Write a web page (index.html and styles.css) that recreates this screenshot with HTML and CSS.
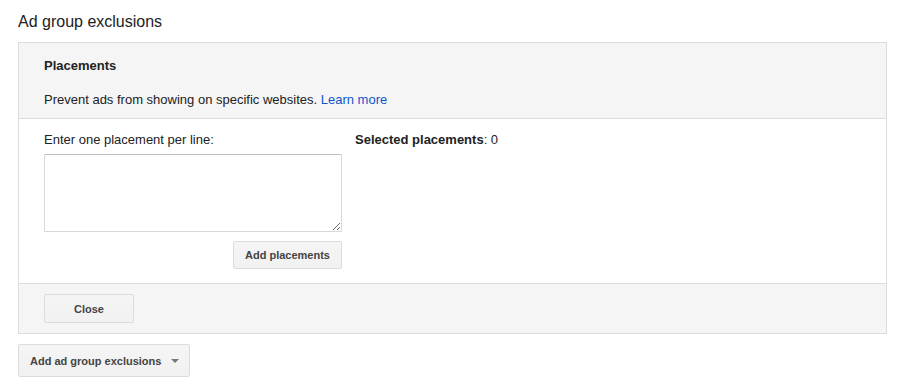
FILE: index.html
```html
<!doctype html>
<html lang="en">
<head>
  <meta charset="utf-8">
  <title>Ad group exclusions</title>
  <link rel="stylesheet" href="styles.css">
</head>
<body>

	<h1 class="title">Ad group exclusions</h1>

	<div class="panel">
		<div class="panel-head">
			<div class="panel-name">Placements</div>
			<div class="panel-desc">Prevent ads from showing on specific websites. <a href="#">Learn more</a></div>
		</div>
		<div class="panel-body">
			<div class="entry">
				<label class="entry-label" for="placements">Enter one placement per line:</label>
				<textarea id="placements" class="entry-box"></textarea>
				<div class="entry-actions">
					<button class="btn btn-add">Add placements</button>
				</div>
			</div>
			<div class="selected"><b>Selected placements</b>: 0</div>
		</div>
		<div class="panel-foot">
			<button class="btn btn-close">Close</button>
		</div>
	</div>

	<button class="btn btn-menu">Add ad group exclusions <span class="caret"></span></button>

</body>
</html>
```

FILE: styles.css
```css
body {
	margin			: 0;
	padding			: 0 13px 0 18px;
	font-family		: "Liberation Sans", Arial, sans-serif;
	font-size		: 13px;
	color			: #222;
	background		: #fff;
}

.title {
	font-size		: 16px;
	font-weight		: normal;
	margin			: 0;
	padding			: 12px 0 10px;
	line-height		: 20px;
}

.panel {
	border			: 1px solid #dcdcdc;
	margin-bottom	: 10px;
}

.panel-head {
	background		: #f5f5f5;
	border-bottom	: 1px solid #dcdcdc;
	padding			: 14px 25px 10px;
}

.panel-name {
	font-weight		: bold;
	line-height		: 17px;
	margin-bottom	: 17px;
}

.panel-desc {
	line-height		: 17px;
}

.panel-desc a {
	color			: #15c;
	text-decoration	: none;
}

.panel-body {
	display			: flex;
	gap				: 13px;
	padding			: 12px 25px 14px;
}

.entry {
	display			: flex;
	flex-direction	: column;
	width			: 298px;
}

.entry-label {
	line-height		: 17px;
	margin-bottom	: 6px;
}

.entry-box {
	box-sizing		: border-box;
	width			: 298px;
	height			: 78px;
	border			: 1px solid #d9d9d9;
	border-top-color: #c0c0c0;
	border-radius	: 1px;
	margin			: 0;
	font-family		: inherit;
	font-size		: 13px;
}

.entry-actions {
	display			: flex;
	justify-content	: flex-end;
	margin-top		: 9px;
}

.selected {
	line-height		: 17px;
}

.panel-foot {
	background		: #f5f5f5;
	border-top		: 1px solid #dcdcdc;
	padding			: 10px 25px 10px;
}

.btn {
	box-sizing		: border-box;
	font-family		: inherit;
	font-size		: 11px;
	font-weight		: bold;
	color			: #444;
	background		: linear-gradient(#f5f5f5, #f1f1f1);
	border			: 1px solid #dcdcdc;
	border-radius	: 2px;
	padding			: 0 8px;
	cursor			: pointer;
}

.btn-add {
	width			: 109px;
	height			: 28px;
}

.btn-close {
	width			: 90px;
	height			: 29px;
}

.btn-menu {
	height			: 33px;
	padding			: 0 10px 0 11px;
	font-size		: 11px;
	display			: inline-flex;
	align-items		: center;
	gap				: 10px;
}

.caret {
	width			: 0;
	height			: 0;
	border-left		: 4px solid transparent;
	border-right	: 4px solid transparent;
	border-top		: 4px solid #777;
}
```
